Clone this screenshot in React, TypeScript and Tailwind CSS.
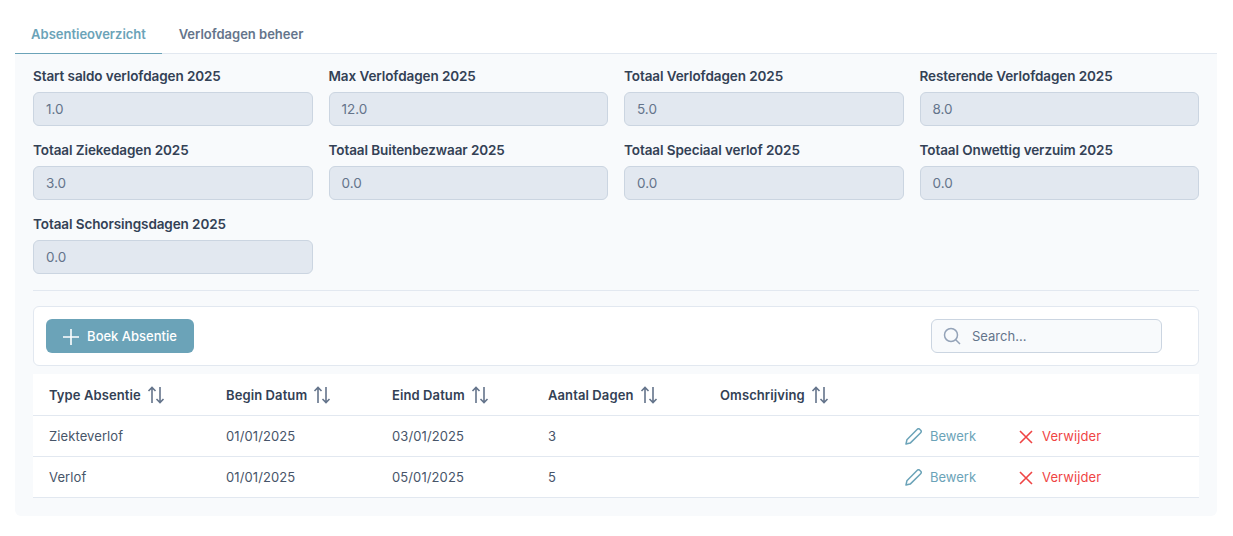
import React from "react";

const font = { fontFamily: "Inter, 'Noto Sans', sans-serif" };

function Field({ label, value }: { label: string; value: string }) {
  return (
    <div className="flex flex-col gap-[6px]">
      <label className="text-[13.5px] leading-5 font-semibold text-[#334155] tracking-[-0.09px] whitespace-nowrap">{label}</label>
      <div className="h-[34px] rounded-md border border-[#cbd5e1] bg-[#e2e8f0] px-3 flex items-center text-[13.5px] text-[#64748b]">{value}</div>
    </div>
  );
}

function SortIcon() {
  return (
    <svg width="18" height="18" viewBox="0 0 18 18" fill="none" stroke="#64748b" strokeWidth="1.6" className="ml-[6px] shrink-0">
      <path d="M5 17V1.500M1.500 5L5 1.500L8.500 5" />
      <path d="M13 1V16.500M9.500 13L13 16.500L16.500 13" />
    </svg>
  );
}

function Pencil() {
  return (
    <svg width="17" height="17" viewBox="0 0 17 17" fill="none" stroke="#6ba3b8" strokeWidth="1.500" strokeLinejoin="round">
      <path d="M1 16l.9-4.200L12.300 1.300a1.700 1.700 0 0 1 2.400 0l1 1a1.700 1.700 0 0 1 0 2.400L5.200 15.100z" />
    </svg>
  );
}

function Cross() {
  return (
    <svg width="14" height="14" viewBox="0 0 14 14" fill="none" stroke="#ef4444" strokeWidth="1.600">
      <path d="M1 1l12 12M13 1L1 13" />
    </svg>
  );
}

const headers = ["Type Absentie", "Begin Datum", "Eind Datum", "Aantal Dagen", "Omschrijving"];
const widths = ["w-[177px]", "w-[166px]", "w-[156px]", "w-[172px]", "w-[185px]"];
const rows = [
  ["Ziekteverlof", "01/01/2025", "03/01/2025", "3"],
  ["Verlof", "01/01/2025", "05/01/2025", "5"],
];

const fields = [
  ["Start saldo verlofdagen 2025", "1.0"],
  ["Max Verlofdagen 2025", "12.0"],
  ["Totaal Verlofdagen 2025", "5.0"],
  ["Resterende Verlofdagen 2025", "8.0"],
  ["Totaal Ziekedagen 2025", "3.0"],
  ["Totaal Buitenbezwaar 2025", "0.0"],
  ["Totaal Speciaal verlof 2025", "0.0"],
  ["Totaal Onwettig verzuim 2025", "0.0"],
  ["Totaal Schorsingsdagen 2025", "0.0"],
];

export default function App() {
  return (
    <div style={font} className="bg-white min-h-[536px] pl-[15px] pr-[16px] pt-[14px]">
      <div className="flex h-[40px] border-b border-[#e2e8f0] text-[13px] font-semibold">
        <div className="h-[40px] w-[147px] pt-[2px] flex items-center justify-center border-b border-[#6ba3b8] text-[#6ba3b8]">Absentieoverzicht</div>
        <div className="h-[40px] w-[158px] pt-px flex items-center justify-center text-[#64748b]">Verlofdagen beheer</div>
      </div>
      <div className="bg-[#f8fafc] rounded-b-md px-[18px] pt-[12px] pb-[18px]">
        <div className="grid grid-cols-4 gap-x-4 gap-y-[14px]">
          {fields.map(([l, v]) => (
            <Field key={l} label={l} value={v} />
          ))}
        </div>
        <div className="border-t border-[#e2e8f0] mt-4 mb-[15px]" />
        <div className="h-[60px] rounded-md border border-[#e2e8f0] bg-white flex items-center justify-between pl-3 pr-9">
          <button className="h-[34px] w-[148px] pt-px rounded-md bg-[#6ba3b8] text-white text-[13px] font-medium flex items-center justify-center gap-2">
            <svg width="16" height="16" viewBox="0 0 16 16" fill="none" stroke="white" strokeWidth="1.6">
              <path d="M8 0v16M0 8h16" />
            </svg>
            Boek Absentie
          </button>
          <div className="h-[34px] w-[231px] rounded-md border border-[#cbd5e1] bg-[#f8fafc] flex items-center pl-[11px] gap-[11px]">
            <svg width="18" height="18" viewBox="0 0 18 18" fill="none" stroke="#94a3b8" strokeWidth="1.500">
              <circle cx="8" cy="8" r="6.500" />
              <path d="M12.700 12.700L17 17" />
            </svg>
            <span className="text-[13px] pt-px text-[#64748b]">Search...</span>
          </div>
        </div>
        <table className="mt-2 w-full bg-white border-collapse table-fixed text-[13px]">
          <thead>
            <tr className="h-[41px] border-b border-[#e2e8f0]">
              {headers.map((h, i) => (
                <th key={h} className={`${widths[i]} pl-4 pt-[2px] text-left font-semibold text-[#334155]`}>
                  <div className="flex items-center whitespace-nowrap tracking-[0.1px]">
                    {h}
                    <SortIcon />
                  </div>
                </th>
              ))}
              <th />
            </tr>
          </thead>
          <tbody>
            {rows.map((r) => (
              <tr key={r[0]} className="h-[41px] border-b border-[#e2e8f0] text-[#475569]">
                {r.map((c, i) => (
                  <td key={i} className="pl-4 pt-[2px] tracking-[0.1px]">{c}</td>
                ))}
                <td />
                <td className="pl-4 pt-[2px]">
                  <div className="flex items-center">
                    <Pencil />
                    <span className="ml-2 w-[89px] text-[#6ba3b8]">Bewerk</span>
                    <Cross />
                    <span className="ml-[9px] text-[#ef4444] tracking-[0.1px]">Verwijder</span>
                  </div>
                </td>
              </tr>
            ))}
          </tbody>
        </table>
      </div>
    </div>
  );
}
